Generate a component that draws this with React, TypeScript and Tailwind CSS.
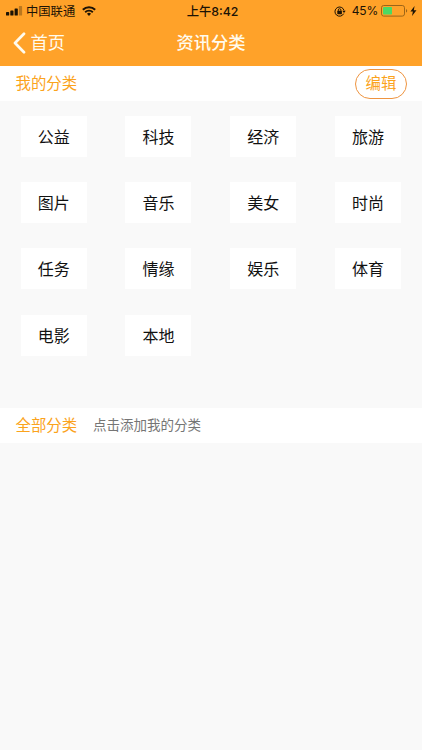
import { useState } from 'react'

type Category = {
  id: number
  name: string
}

const initialCategories: Category[] = [
  { id: 1, name: '公益' },
  { id: 2, name: '科技' },
  { id: 3, name: '经济' },
  { id: 4, name: '旅游' },
  { id: 5, name: '图片' },
  { id: 6, name: '音乐' },
  { id: 7, name: '美女' },
  { id: 8, name: '时尚' },
  { id: 9, name: '任务' },
  { id: 10, name: '情缘' },
  { id: 11, name: '娱乐' },
  { id: 12, name: '体育' },
  { id: 13, name: '电影' },
  { id: 14, name: '本地' },
]

const SignalIcon = () => (
  <svg width="17" height="10" viewBox="0 0 17 10" fill="#1c1305">
    <rect x="0" y="6" width="3.2" height="3.6" rx="0.7" />
    <rect x="4.3" y="4.4" width="3.2" height="5.2" rx="0.7" />
    <rect x="8.6" y="2.4" width="3.2" height="7.2" rx="0.7" />
    <rect x="12.9" y="0" width="3.2" height="9.6" rx="0.7" opacity="0.3" />
  </svg>
)

const WifiIcon = () => (
  <svg width="14" height="10.3" viewBox="0 0 15 11" fill="none" stroke="#1c1305">
    <path d="M0.9 4.1a9.4 9.4 0 0 1 13.2 0" strokeWidth="2.2" />
    <path d="M3.4 6.7a5.8 5.8 0 0 1 8.2 0" strokeWidth="2" />
    <path d="M7.5 10.6 5.3 8.4a3.1 3.1 0 0 1 4.4 0z" fill="#1c1305" stroke="none" />
  </svg>
)

const RotationLockIcon = () => (
  <svg width="12" height="11" viewBox="0 0 12 11" fill="none" stroke="#1c1305">
    <path d="M9.7 7.6A4.6 4.6 0 1 1 10 4.4" strokeWidth="1" />
    <path d="M8.3 4.8h3.4L10 7z" fill="#1c1305" stroke="none" />
    <rect x="3.3" y="4.8" width="4.6" height="3.4" rx="0.4" fill="#1c1305" stroke="none" />
    <path d="M4.3 5.2V4a1.3 1.3 0 0 1 2.6 0v1.2" strokeWidth="0.9" />
  </svg>
)

const BatteryIcon = () => (
  <svg width="27" height="12" viewBox="0 0 27 12">
    <rect x="0.5" y="0.5" width="23" height="10.6" rx="2.2" fill="none" stroke="#9c6518" />
    <rect x="2" y="2" width="9" height="7.6" rx="0.8" fill="#4cd964" />
    <path d="M25 4v3.6c1.6-.5 1.6-3.1 0-3.6z" fill="#9c6518" />
  </svg>
)

const BoltIcon = () => (
  <svg width="7" height="10" viewBox="0 0 7 10" fill="#1c1305">
    <path d="M4.6 0 0.4 5.6h2.5L2 10l4.5-5.8H3.8z" />
  </svg>
)

const StatusBar = () => (
  <div className="grid h-[22px] grid-cols-[1fr_auto_1fr] items-center pl-[6px] pr-[5px] text-[12.3px] leading-[20px] text-[#1c1305]">
    <div className="flex items-center">
      <SignalIcon />
      <span className="ml-[3px] mr-[7px] pt-px">中国联通</span>
      <WifiIcon />
    </div>
    <span className="pl-[2px] pt-px font-medium">上午8:42</span>
    <div className="flex items-center justify-end">
      <RotationLockIcon />
      <span className="ml-[6px] mr-[3px] text-[12px] tracking-[-0.2px]">45%</span>
      <BatteryIcon />
      <span className="ml-[2px]">
        <BoltIcon />
      </span>
    </div>
  </div>
)

export default function App() {
  const [categories, setCategories] = useState<Category[]>(initialCategories)
  const [editing, setEditing] = useState<boolean>(false)

  const handleClick = (id: number) => {
    if (!editing) {
      return
    }
    setCategories((prev) => prev.filter((category) => category.id !== id))
  }

  return (
    <div className="min-h-screen w-full bg-[#f9f9f9] font-[Inter,'Noto_Sans_CJK_SC',sans-serif]">
      <header className="h-[66px] bg-[#ffa229]">
        <StatusBar />
        <div className="grid h-[42px] grid-cols-[1fr_auto_1fr] items-center text-[17.3px] leading-[42px] text-[#fffbee]">
          <button className="flex items-center pl-[13px]">
            <svg
              width="13"
              height="22"
              viewBox="0 0 13 22"
              fill="none"
              stroke="currentColor"
              strokeWidth="2.7"
              strokeLinecap="round"
              strokeLinejoin="round">
              <path d="M11 1.8 2 11l9 9.2" />
            </svg>
            <span className="ml-[4.5px]">首页</span>
          </button>
          <h1 className="font-medium">资讯分类</h1>
        </div>
      </header>

      <section className="flex h-[35px] items-center justify-between bg-white pl-[15.5px] pr-[15px]">
        <h2 className="pt-px text-[15.4px] text-[#fba31c]">我的分类</h2>
        <button
          className="h-[30px] w-[52px] rounded-full border-[1.5px] border-[#ee9440] text-[15.4px] leading-[28px] text-[#fba31c]"
          onClick={() => setEditing((prev) => !prev)}>
          编辑
        </button>
      </section>

      <div className="grid h-[306.5px] auto-rows-[41px] grid-cols-[repeat(4,66px)] content-start gap-x-[38.8px] gap-y-[25.2px] pl-[20.7px] pt-[15px]">
        {categories.map((category) => (
          <button
            key={category.id}
            className="bg-white pt-px text-[16px] leading-[41px] text-[#111]"
            onClick={() => handleClick(category.id)}>
            {category.name}
          </button>
        ))}
      </div>

      <section className="flex h-[35px] items-center bg-white pl-[15.5px]">
        <h2 className="pt-px text-[15.4px] text-[#fba31c]">全部分类</h2>
        <p className="ml-[16px] pt-px text-[13.5px] text-[#757575]">
          点击添加我的分类
        </p>
      </section>
    </div>
  )
}
